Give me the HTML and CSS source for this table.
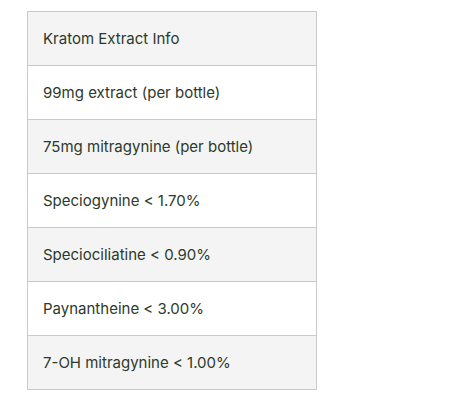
FILE: index.html
```html
<!DOCTYPE html>
<html>
<head>
<meta charset="utf-8">
<link rel="stylesheet" href="styles.css">
</head>
<body>
<table class="info">
<tbody>
<tr class="alt"><td>Kratom Extract Info</td></tr>
<tr><td>99mg extract (per bottle)</td></tr>
<tr class="alt"><td>75mg mitragynine (per bottle)</td></tr>
<tr><td>Speciogynine &lt; 1.70%</td></tr>
<tr class="alt"><td>Speciociliatine &lt; 0.90%</td></tr>
<tr><td>Paynantheine &lt; 3.00%</td></tr>
<tr class="alt"><td>7-OH mitragynine &lt; 1.00%</td></tr>
</tbody>
</table>
</body>
</html>
```
FILE: styles.css
```css
html, body {
  margin: 0;
  padding: 0;
  background: #ffffff;
}
body {
  padding: 11px 0 0 27px;
  font-family: Inter, "Noto Sans", sans-serif;
}
.info {
  border-collapse: collapse;
  width: 290px;
  border: 1px solid #cacaca;
}
.info td {
  border: 1px solid #cacaca;
  padding: 15px 15px;
  font-size: 15px;
  line-height: 23px;
  color: #2c3a2a;
}
.info tr.alt td {
  background: #f4f4f4;
}
```
